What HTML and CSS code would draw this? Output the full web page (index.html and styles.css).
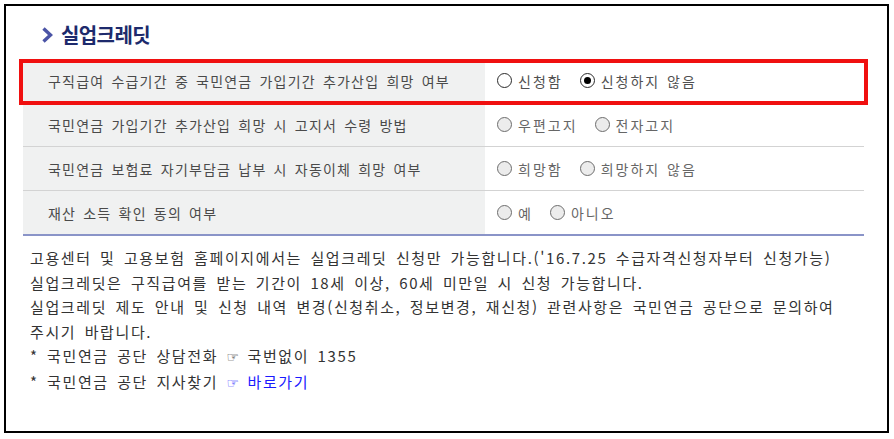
FILE: index.html
```html
<!DOCTYPE html>
<html lang="ko">
<head>
<meta charset="utf-8">
<title>실업크레딧</title>
<link rel="stylesheet" href="styles.css">
</head>
<body>
<div class="frame">
  <h2 class="title">
    <svg class="chev" width="11" height="16" viewBox="0 0 11 16"><polyline points="1.5,1.5 8.5,8 1.5,14.5" fill="none" stroke="#4b54a6" stroke-width="3.4"/></svg>
    <span>실업크레딧</span>
  </h2>
  <div class="table">
    <div class="row hl">
      <div class="th">구직급여 수급기간 중 국민연금 가입기간 추가산입 희망 여부</div>
      <div class="td">
        <label class="opt"><input type="radio" name="r1" class="dark">신청함</label>
        <label class="opt"><input type="radio" name="r1" class="dark" checked>신청하지 않음</label>
      </div>
    </div>
    <div class="row">
      <div class="th">국민연금 가입기간 추가산입 희망 시 고지서 수령 방법</div>
      <div class="td">
        <label class="opt"><input type="radio" name="r2" disabled>우편고지</label>
        <label class="opt"><input type="radio" name="r2" disabled>전자고지</label>
      </div>
    </div>
    <div class="row">
      <div class="th">국민연금 보험료 자기부담금 납부 시 자동이체 희망 여부</div>
      <div class="td">
        <label class="opt"><input type="radio" name="r3" disabled>희망함</label>
        <label class="opt"><input type="radio" name="r3" disabled>희망하지 않음</label>
      </div>
    </div>
    <div class="row last">
      <div class="th">재산 소득 확인 동의 여부</div>
      <div class="td">
        <label class="opt"><input type="radio" name="r4" disabled>예</label>
        <label class="opt"><input type="radio" name="r4" disabled>아니오</label>
      </div>
    </div>
  </div>
  <div class="notes">
    <p>고용센터 및 고용보험 홈페이지에서는 실업크레딧 신청만 가능합니다.('16.7.25 수급자격신청자부터 신청가능)</p>
    <p>실업크레딧은 구직급여를 받는 기간이 18세 이상, 60세 미만일 시 신청 가능합니다.</p>
    <p>실업크레딧 제도 안내 및 신청 내역 변경(신청취소, 정보변경, 재신청) 관련사항은 국민연금 공단으로 문의하여<br>주시기 바랍니다.</p>
    <p>* 국민연금 공단 상담전화 <span class="hand">☞</span> 국번없이 1355</p>
    <p>* 국민연금 공단 지사찾기 <a class="link" href="#"><span class="hand">☞</span> 바로가기</a></p>
  </div>
</div>
</body>
</html>
```

FILE: styles.css
```css
* { box-sizing: border-box; }
html, body { margin: 0; padding: 0; background: #fff; }
body {
  font-family: "Noto Sans CJK KR", "Noto Sans", sans-serif;
  width: 894px;
  height: 439px;
  overflow: hidden;
}
.frame {
  margin: 4px 0 0 4px;
  width: 885px;
  height: 429px;
  border: 2px solid #000;
  padding: 0 23px 0 17px;
}
.title {
  margin: 0;
  height: 53px;
  display: flex;
  align-items: center;
  padding: 4px 0 0 19px;
  font-size: 20px;
  font-weight: 700;
  color: #1d2a6c;
  letter-spacing: -0.6px;
}
.chev { margin-right: 8px; margin-top: 1px; }
.table {
  border-bottom: 2px solid #8a94c8;
}
.row {
  display: flex;
  height: 44px;
  border-bottom: 1px solid #d3d3d3;
  font-size: 14px;
}
.row.last { border-bottom: 0; height: 43px; }
.row.hl { position: relative; }
.row.hl::after {
  content: "";
  position: absolute;
  left: -4px; right: -4px; top: 0; bottom: -3px;
  border: 4px solid #f01010;
  pointer-events: none;
}
.th {
  width: 462px;
  background: #f0f1f1;
  color: #4a4a4a;
  padding-left: 25px;
  display: flex;
  align-items: center;
  letter-spacing: 1.2px;
  word-spacing: 2px;
}
.td {
  flex: 1;
  display: flex;
  align-items: center;
  padding-left: 12px;
  gap: 17px;
  color: #666;
  letter-spacing: 2px;
  word-spacing: 1px;
}
.hl .td { color: #505050; }
.opt { display: flex; align-items: center; gap: 6px; }
.opt input {
  appearance: none;
  -webkit-appearance: none;
  margin: 0;
  width: 15px;
  height: 15px;
  border-radius: 50%;
  border: 1px solid #6d6d6d;
  background: #ececec;
  position: relative;
}
.opt input.dark { background: #fff; border-color: #2a2a2a; }
.opt input:checked::after {
  content: "";
  position: absolute;
  left: 3px; top: 3px;
  width: 7px; height: 7px;
  border-radius: 50%;
  background: #000;
}
.notes {
  padding: 10px 0 0 7px;
  font-size: 15px;
  line-height: 24.6px;
  color: #333;
  letter-spacing: 1.62px;
  word-spacing: 2.6px;
}
.notes p { margin: 0; white-space: nowrap; }
.hand { font-family: "DejaVu Sans", sans-serif; font-size: 14px; letter-spacing: 0; color: #222; }
.link { color: #1a1aff; text-decoration: none; }
.link .hand { color: #1a1aff; }
```
